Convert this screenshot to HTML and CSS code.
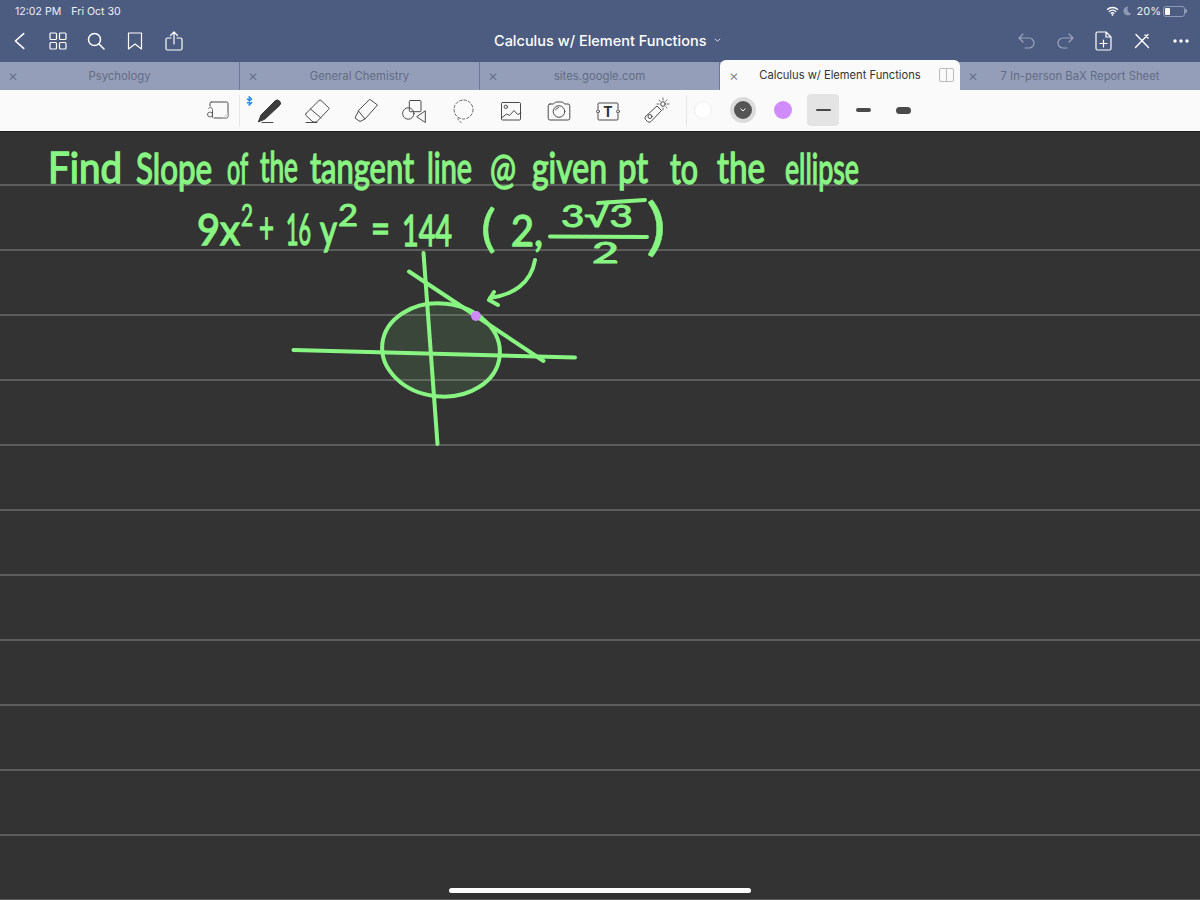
FILE: index.html
```html
<!DOCTYPE html>
<html lang="en">
<head>
<meta charset="utf-8">
<title>Calculus w/ Element Functions</title>
<link rel="stylesheet" href="styles.css">
</head>
<body>
<div class="screen">
  <header class="appbar">
    <div class="status">
      <span class="clock">12:02 PM</span><span class="date">Fri Oct 30</span>
      <span class="status-right">
        <svg class="ic-wifi" viewBox="0 0 14 11"><path d="M1 4a9 9 0 0 1 12 0M3 6.200a6 6 0 0 1 8 0M5 8.300a3 3 0 0 1 4 0" fill="none" stroke="#fff" stroke-width="1.500"/><circle cx="7" cy="9.800" r="1" fill="#fff"/></svg>
        <svg class="ic-moon" viewBox="0 0 10 11"><path d="M6 .5a5 5 0 1 0 3.500 8A5 5 0 0 1 6 .5z" fill="#8f99b3"/></svg>
        <span class="pct">20%</span>
        <span class="battery"><span class="battery-level"></span></span><span class="battery-cap"></span>
      </span>
    </div>
    <div class="nav">
      <div class="nav-left">
        <svg class="ic ic-back" viewBox="0 0 24 24"><path d="M16 4 7 12l9 8"/></svg>
        <svg class="ic ic-grid" viewBox="0 0 18 18"><rect x="1" y="1" width="6.500" height="6.500" rx="1"/><rect x="10.500" y="1" width="6.500" height="6.500" rx="1"/><rect x="1" y="10.500" width="6.500" height="6.500" rx="1"/><rect x="10.500" y="10.500" width="6.500" height="6.500" rx="1"/></svg>
        <svg class="ic ic-search" viewBox="0 0 18 18"><circle cx="7.500" cy="7.500" r="6"/><path d="m12 12 5 5"/></svg>
        <svg class="ic ic-book" viewBox="0 0 16 18"><path d="M1.500 1h13v16L8 12l-6.500 5z"/></svg>
        <svg class="ic ic-share" viewBox="0 0 18 20"><path d="M6 7H2.500A1.500 1.500 0 0 0 1 8.500v9A1.500 1.500 0 0 0 2.500 19h13a1.500 1.500 0 0 0 1.500-1.500v-9A1.500 1.500 0 0 0 15.500 7H12M9 13V1M5.500 4.500 9 1l3.500 3.500"/></svg>
      </div>
      <div class="title">Calculus w/ Element Functions<svg class="title-chev" viewBox="0 0 8 6"><path d="m1 1 3 3 3-3"/></svg></div>
      <div class="nav-right">
        <svg class="ic ic-undo dim" viewBox="0 0 18 16"><path d="M5 1 1 5l4 4M1 5h10a5 5 0 0 1 0 10H7"/></svg>
        <svg class="ic ic-redo dim" viewBox="0 0 18 16"><path d="m13 1 4 4-4 4M17 5H7a5 5 0 0 0 0 10h4"/></svg>
        <svg class="ic ic-add" viewBox="0 0 17 20"><path d="M2.500 1H11l5 5v11.500a1.500 1.500 0 0 1-1.500 1.500h-12A1.500 1.500 0 0 1 1 17.500v-15A1.500 1.500 0 0 1 2.500 1zM11 1v5h5M8.500 9v7M5 12.500h7"/></svg>
        <svg class="ic ic-xpen" viewBox="0 0 16 16"><path d="M2 1.500 14.500 14.500M14 1.500 1.500 14.500M11 2l3 3"/></svg>
        <svg class="ic-dots" viewBox="0 0 16 4"><circle cx="2" cy="2" r="1.700"/><circle cx="8" cy="2" r="1.700"/><circle cx="14" cy="2" r="1.700"/></svg>
      </div>
    </div>
  </header>

  <nav class="tabs">
    <div class="tab"><span class="tab-x">×</span><span class="tab-name">Psychology</span></div>
    <div class="tab"><span class="tab-x">×</span><span class="tab-name">General Chemistry</span></div>
    <div class="tab"><span class="tab-x">×</span><span class="tab-name">sites.google.com</span></div>
    <div class="tab active"><span class="tab-x">×</span><span class="tab-name">Calculus w/ Element Functions</span>
      <span class="split"><span class="split-pane"></span><span class="split-pane"></span></span>
    </div>
    <div class="tab"><span class="tab-x">×</span><span class="tab-name">7 In-person BaX Report Sheet</span></div>
  </nav>

  <div class="toolbar">
    <svg class="tool convert" viewBox="0 0 24 24"><path d="M6.500 3h15a1.500 1.500 0 0 1 1.500 1.500v13a1.500 1.500 0 0 1-1.500 1.500H9M5 7V4.500A1.500 1.500 0 0 1 6.500 3"/><path class="soft" d="m22.500 13.500-5 5h5z"/><path class="thin" d="M2.500 15.500a2.500 2.500 0 1 0 5 0 2.500 2.500 0 1 0-5 0M7.500 13v5.500M3.500 9.500a2.200 2.200 0 0 1 4 1v3"/></svg>
    <span class="vsep"></span>
    <div class="tools">
      <span class="tool-slot">
        <svg class="bt" viewBox="0 0 7 10"><path d="M1 2.800 5.500 6.800 3.300 9V1l2.200 2.200L1 7.200"/></svg>
        <svg class="tool" viewBox="0 0 24 24"><path class="ink" d="M1.500 22.500 4 16 18 2a2.800 2.800 0 0 1 4.500 4.500L8 20z"/><path d="M5 23.500h11"/></svg>
      </span>
      <svg class="tool" viewBox="0 0 24 24"><path d="M1 14.500 14 1.500a1.500 1.500 0 0 1 2 0l7.500 7a1.500 1.500 0 0 1 0 2L11.500 23H8l-7-6.500a1.500 1.500 0 0 1 0-2zM5.500 10 16 19M1 23.500h11"/></svg>
      <svg class="tool" viewBox="0 0 24 24"><path d="M16 .5 23.500 6 11 20 4.500 12zM4.500 12 1 19l5 3.500 5-2.500"/></svg>
      <svg class="tool" viewBox="0 0 24 24"><rect x="7.300" y="1.500" width="11.700" height="11.200" rx="1"/><circle cx="6.300" cy="14.500" r="5.700"/><path d="M23 12 14.700 17.700 23 23.300z"/></svg>
      <svg class="tool lasso" viewBox="0 0 24 24"><circle cx="12.500" cy="10.500" r="9.500"/><path d="M7 19c-1 2 2 2.500 3 4.500"/></svg>
      <svg class="tool" viewBox="0 0 24 24"><rect x="2.500" y="3.500" width="19" height="17.500" rx="1"/><circle cx="6.800" cy="7.800" r="1.700"/><path d="m2.500 19 5-4 3 1.500 4.500-5 3.500 4 3.500-1.500"/></svg>
      <svg class="tool" viewBox="0 0 24 24"><path d="M3 5h3.500L8.500 3h7l2 2H21a1.800 1.800 0 0 1 1.800 1.800v12.400A1.800 1.800 0 0 1 21 21H3a1.800 1.800 0 0 1-1.800-1.800V6.800A1.800 1.800 0 0 1 3 5z"/><circle cx="12" cy="12.500" r="5.800"/><path d="M8.500 11a4 4 0 0 1 3-2.500"/></svg>
      <svg class="tool text-tool" viewBox="0 0 24 24"><path d="M2 10V5a1 1 0 0 1 1-1h18a1 1 0 0 1 1 1v5M22 15v5a1 1 0 0 1-1 1H3a1 1 0 0 1-1-1v-5"/><circle cx="2" cy="12.500" r="1.500"/><circle cx="22" cy="12.500" r="1.500"/><text class="text-tool-t" x="12" y="17.500">T</text></svg>
      <svg class="tool" viewBox="0 0 24 24"><path d="M1.500 17.500 13 7l4.500 4.500L7 22.500a2.500 2.500 0 0 1-3.500 0l-2-2a2.200 2.200 0 0 1 0-3z"/><circle cx="6" cy="17.500" r="2"/><circle cx="19" cy="5" r="2.300"/><path class="thin" d="M19 -1v2M19 9v2M13 5h2M23 5h2M15 1l1.300 1.300M21.700 7.700 23 9M23 1l-1.300 1.300"/></svg>
    </div>
    <span class="vsep vsep-b"></span>
    <div class="swatches">
      <span class="slot"><span class="swatch-white"></span></span>
      <span class="slot"><span class="swatch-current"><svg class="swatch-chev" viewBox="0 0 8 6"><path d="m1.500 1.500 2.500 2.500 2.500-2.500"/></svg></span></span>
      <span class="slot"><span class="swatch-purple"></span></span>
      <span class="slot slot-on"><span class="weight w1"></span></span>
      <span class="slot"><span class="weight w2"></span></span>
      <span class="slot"><span class="weight w3"></span></span>
    </div>
  </div>

  <main class="page">
    <svg class="ink-sheet" viewBox="0 131 1200 769">
      <g class="hand" transform="scale(.7 1)">
        <text x="68.600" y="183" textLength="105.700" lengthAdjust="spacingAndGlyphs">Find</text>
        <text x="194.300" y="184" textLength="108.600" lengthAdjust="spacingAndGlyphs">Slope</text>
        <text x="324.300" y="184" textLength="30" lengthAdjust="spacingAndGlyphs">of</text>
        <text x="371.400" y="182" textLength="54.300" lengthAdjust="spacingAndGlyphs">the</text>
        <text x="442.900" y="183" textLength="148.600" lengthAdjust="spacingAndGlyphs">tangent</text>
        <text x="610" y="183" textLength="64.300" lengthAdjust="spacingAndGlyphs">line</text>
        <text x="700" y="184" textLength="37.100" lengthAdjust="spacingAndGlyphs">@</text>
        <text x="760" y="183" textLength="107.100" lengthAdjust="spacingAndGlyphs">given</text>
        <text x="882.900" y="183" textLength="42.900" lengthAdjust="spacingAndGlyphs">pt</text>
        <text x="957.100" y="184" textLength="40" lengthAdjust="spacingAndGlyphs">to</text>
        <text x="1024.300" y="183" textLength="68.600" lengthAdjust="spacingAndGlyphs">the</text>
        <text x="1121.400" y="184" textLength="105.700" lengthAdjust="spacingAndGlyphs">ellipse</text>
      </g>
      <g class="hand" transform="scale(.7 1)">
        <text x="281.400" y="245" textLength="61.400" lengthAdjust="spacingAndGlyphs">9x</text>
        <text x="370" y="243" textLength="21.400" lengthAdjust="spacingAndGlyphs">+</text>
        <text x="408.600" y="245" textLength="35.700" lengthAdjust="spacingAndGlyphs">16</text>
        <text x="457.100" y="245" textLength="24.300" lengthAdjust="spacingAndGlyphs">y</text>
        <text x="530" y="243" textLength="27.100" lengthAdjust="spacingAndGlyphs">=</text>
        <text x="574.300" y="246" textLength="71.400" lengthAdjust="spacingAndGlyphs">144</text>
        <text x="687.100" y="246" textLength="21.400" lengthAdjust="spacingAndGlyphs" class="paren-open">(</text>
        <text x="730" y="246" textLength="45.700" lengthAdjust="spacingAndGlyphs">2,</text>
      </g>
      <g class="hand small">
        <text x="241" y="226" textLength="12" lengthAdjust="spacingAndGlyphs">2</text>
        <text x="338" y="226" textLength="20" lengthAdjust="spacingAndGlyphs">2</text>
        <text x="561" y="227" textLength="72" lengthAdjust="spacingAndGlyphs">3√3</text>
        <text class="denom" x="592" y="263" textLength="27" lengthAdjust="spacingAndGlyphs">2</text>
        <text class="paren-close" x="646" y="248" textLength="20" lengthAdjust="spacingAndGlyphs">)</text>
      </g>
      <g class="ink-line">
        <path d="M598 203 645 200"/>
        <path d="M550 236.500 647 237"/>
        <ellipse class="ellipse" cx="441" cy="350" rx="59" ry="46.500" transform="rotate(6 441 350)"/>
        <path d="M423.500 253 437.500 444"/>
        <path d="M293.500 350 575 357.500"/>
        <path d="M409 271.500 470 312 543.500 361"/>
        <path d="M535 260C531 284 512 295 490 298M494 292 489 300 498 305"/>
      </g>
      <circle class="point" cx="476" cy="316" r="5"/>
    </svg>
    <span class="home-bar"></span>
  </main>
</div>
</body>
</html>
```
FILE: styles.css
```css
* { box-sizing: border-box; }
html, body { margin: 0; padding: 0; }
body { background: #333; font-family: Inter, "Liberation Sans", sans-serif; }
.screen { width: 1200px; height: 900px; display: flex; flex-direction: column; overflow: hidden; }

.appbar { height: 62px; flex: none; background: #4c5b80; color: #fff; }
.status { height: 22px; display: flex; align-items: center; padding: 0 13px 0 15px; font-size: 10.600px; color: #eef0f5; }
.date { margin-left: 10px; }
.status-right { margin-left: auto; display: flex; align-items: center; }
.ic-wifi { width: 13px; height: 10px; }
.ic-moon { width: 9px; height: 10px; margin-left: 4px; }
.pct { margin-left: 5px; font-size: 11px; }
.battery { width: 22px; height: 11px; margin-left: 2px; border: 1px solid #8f99b3; border-radius: 3px; padding: 1px; display: flex; }
.battery-level { width: 5px; background: #fff; border-radius: 1px; }
.battery-cap { width: 2px; height: 4px; background: #8f99b3; border-radius: 0 1px 1px 0; }

.nav { height: 38px; display: flex; align-items: center; justify-content: space-between; position: relative; padding: 0 11px; }
.nav-left, .nav-right { display: flex; align-items: center; }
.ic { fill: none; stroke: #fff; stroke-width: 1.200; stroke-linejoin: round; stroke-linecap: round; display: block; flex: none; }
.ic-back { width: 22px; height: 22px; stroke-width: 1.800; margin-left: -2.400px; }
.ic-grid { width: 18px; height: 18px; margin-left: 18.400px; }
.ic-search { width: 18px; height: 18px; margin-left: 20px; stroke-width: 1.500; }
.ic-book { width: 16px; height: 18px; margin-left: 22px; }
.ic-share { width: 18px; height: 20px; margin-left: 22px; }
.ic-undo { width: 18px; height: 16px; margin-right: 20px; }
.ic-redo { width: 18px; height: 16px; margin-right: 21px; }
.dim { stroke: #9aa3bb; }
.ic-add { width: 17px; height: 20px; margin-right: 22px; }
.ic-xpen { width: 16px; height: 16px; margin-right: 23px; stroke-width: 1.400; }
.ic-dots { width: 16px; height: 4px; fill: #fff; }
.title { position: absolute; left: 494px; top: 10px; font-size: 14.500px; font-weight: 500; color: #fff; display: flex; align-items: center; white-space: nowrap; }
.title-chev { width: 7px; height: 5px; margin-left: 7px; fill: none; stroke: #dde1ea; stroke-width: 1.200; }

.tabs { height: 28px; flex: none; display: flex; background: #949eb8; }
.tab { width: 240px; display: flex; align-items: center; justify-content: center; position: relative; font-size: 11.300px; color: #626c86; border-right: 1px solid #6f7a98; }
.tab:last-child { border-right: none; }
.tab-x { position: absolute; left: 8px; top: 5px; font-size: 15px; line-height: 18px; font-weight: 300; color: #5f6984; }
.tab.active { background: #fafafa; color: #333; height: 30px; margin-top: -2px; border-radius: 6px 6px 0 0; border: none; font-size: 11.150px; z-index: 1; }
.tab.active .tab-x { top: 7px; left: 9px; color: #777; }
.split { position: absolute; right: 6px; top: 8px; width: 15px; height: 14px; border: 1px solid #bbb; border-radius: 2px; display: flex; }
.split-pane { flex: 1; }
.split-pane + .split-pane { border-left: 1px solid #bbb; }

.toolbar { height: 41px; flex: none; background: #fafafa; display: flex; align-items: center; padding: 1px 0 0 205px; }
.tool { width: 24px; height: 24px; flex: none; display: block; fill: none; stroke: #4a4a4a; stroke-width: 1; stroke-linejoin: round; stroke-linecap: round; overflow: visible; }
.thin { stroke-width: .800; }
.soft { fill: #e2e2e2; stroke: none; }
.ink { fill: #3d3d3d; stroke: #333; }
.lasso { stroke: #666; stroke-dasharray: 2.500 2; }
.vsep { width: 1px; height: 32px; background: #e6e6e6; margin-left: 10px; flex: none; }
.tools { display: flex; align-items: center; gap: 24.400px; margin-left: 17px; }
.tool-slot { position: relative; display: block; width: 24px; height: 24px; }
.bt { position: absolute; left: -11px; top: -3px; width: 7px; height: 10px; fill: none; stroke: #2f8cf2; stroke-width: 1.500; }
.text-tool-t { font-family: Inter, "Liberation Sans", sans-serif; font-size: 14px; font-weight: 700; fill: #333; stroke: none; text-anchor: middle; }
.vsep-b { margin-left: 18px; }
.swatches { display: flex; align-items: center; gap: 8px; margin-top: -2px; }
.slot { width: 32px; height: 32px; border-radius: 4px; display: flex; align-items: center; justify-content: center; flex: none; }
.slot-on { background: #e4e4e4; }
.swatch-white { width: 18px; height: 18px; border-radius: 50%; background: #fff; border: 1px solid #f0f0f0; }
.swatch-current { width: 26px; height: 26px; border-radius: 50%; background: #555; border: 4px solid #dcdcdc; display: flex; align-items: center; justify-content: center; }
.swatch-chev { width: 8px; height: 6px; fill: none; stroke: #fff; stroke-width: 1; }
.swatch-purple { width: 18px; height: 18px; border-radius: 50%; background: #d08cfa; }
.weight { display: block; width: 15px; background: #4a4a4a; border-radius: 4px; }
.w1 { height: 2.500px; }
.w2 { height: 3.500px; }
.w3 { height: 7px; }

.page { flex: 1; position: relative; border-top: 1px solid #1f1f1f; background-color: #333; background-image: linear-gradient(to bottom, #5c5c5c 2px, transparent 2px); background-size: 100% 65px; background-position: 0 52px; }
.ink-sheet { position: absolute; left: 0; top: -1px; width: 1200px; height: 769px; display: block; }
.hand { font-family: Lato, "Liberation Sans", sans-serif; font-size: 42px; font-weight: 400; fill: #88f582; stroke: #88f582; stroke-width: 1.400; }
.hand.small { font-size: 30px; stroke-width: 1; }
.denom { font-size: 28px; }
.paren-open { font-size: 50px; stroke-width: .6; }
.paren-close { font-size: 62px; stroke-width: .4; }
.ink-line { fill: none; stroke: #88f582; stroke-width: 4; stroke-linecap: round; stroke-linejoin: round; }
.ellipse { fill: rgba(136, 245, 130, .1); }
.point { fill: #cf8bf9; }
.home-bar { position: absolute; left: 449px; bottom: 7px; width: 302px; height: 5px; border-radius: 3px; background: #fff; }
```
